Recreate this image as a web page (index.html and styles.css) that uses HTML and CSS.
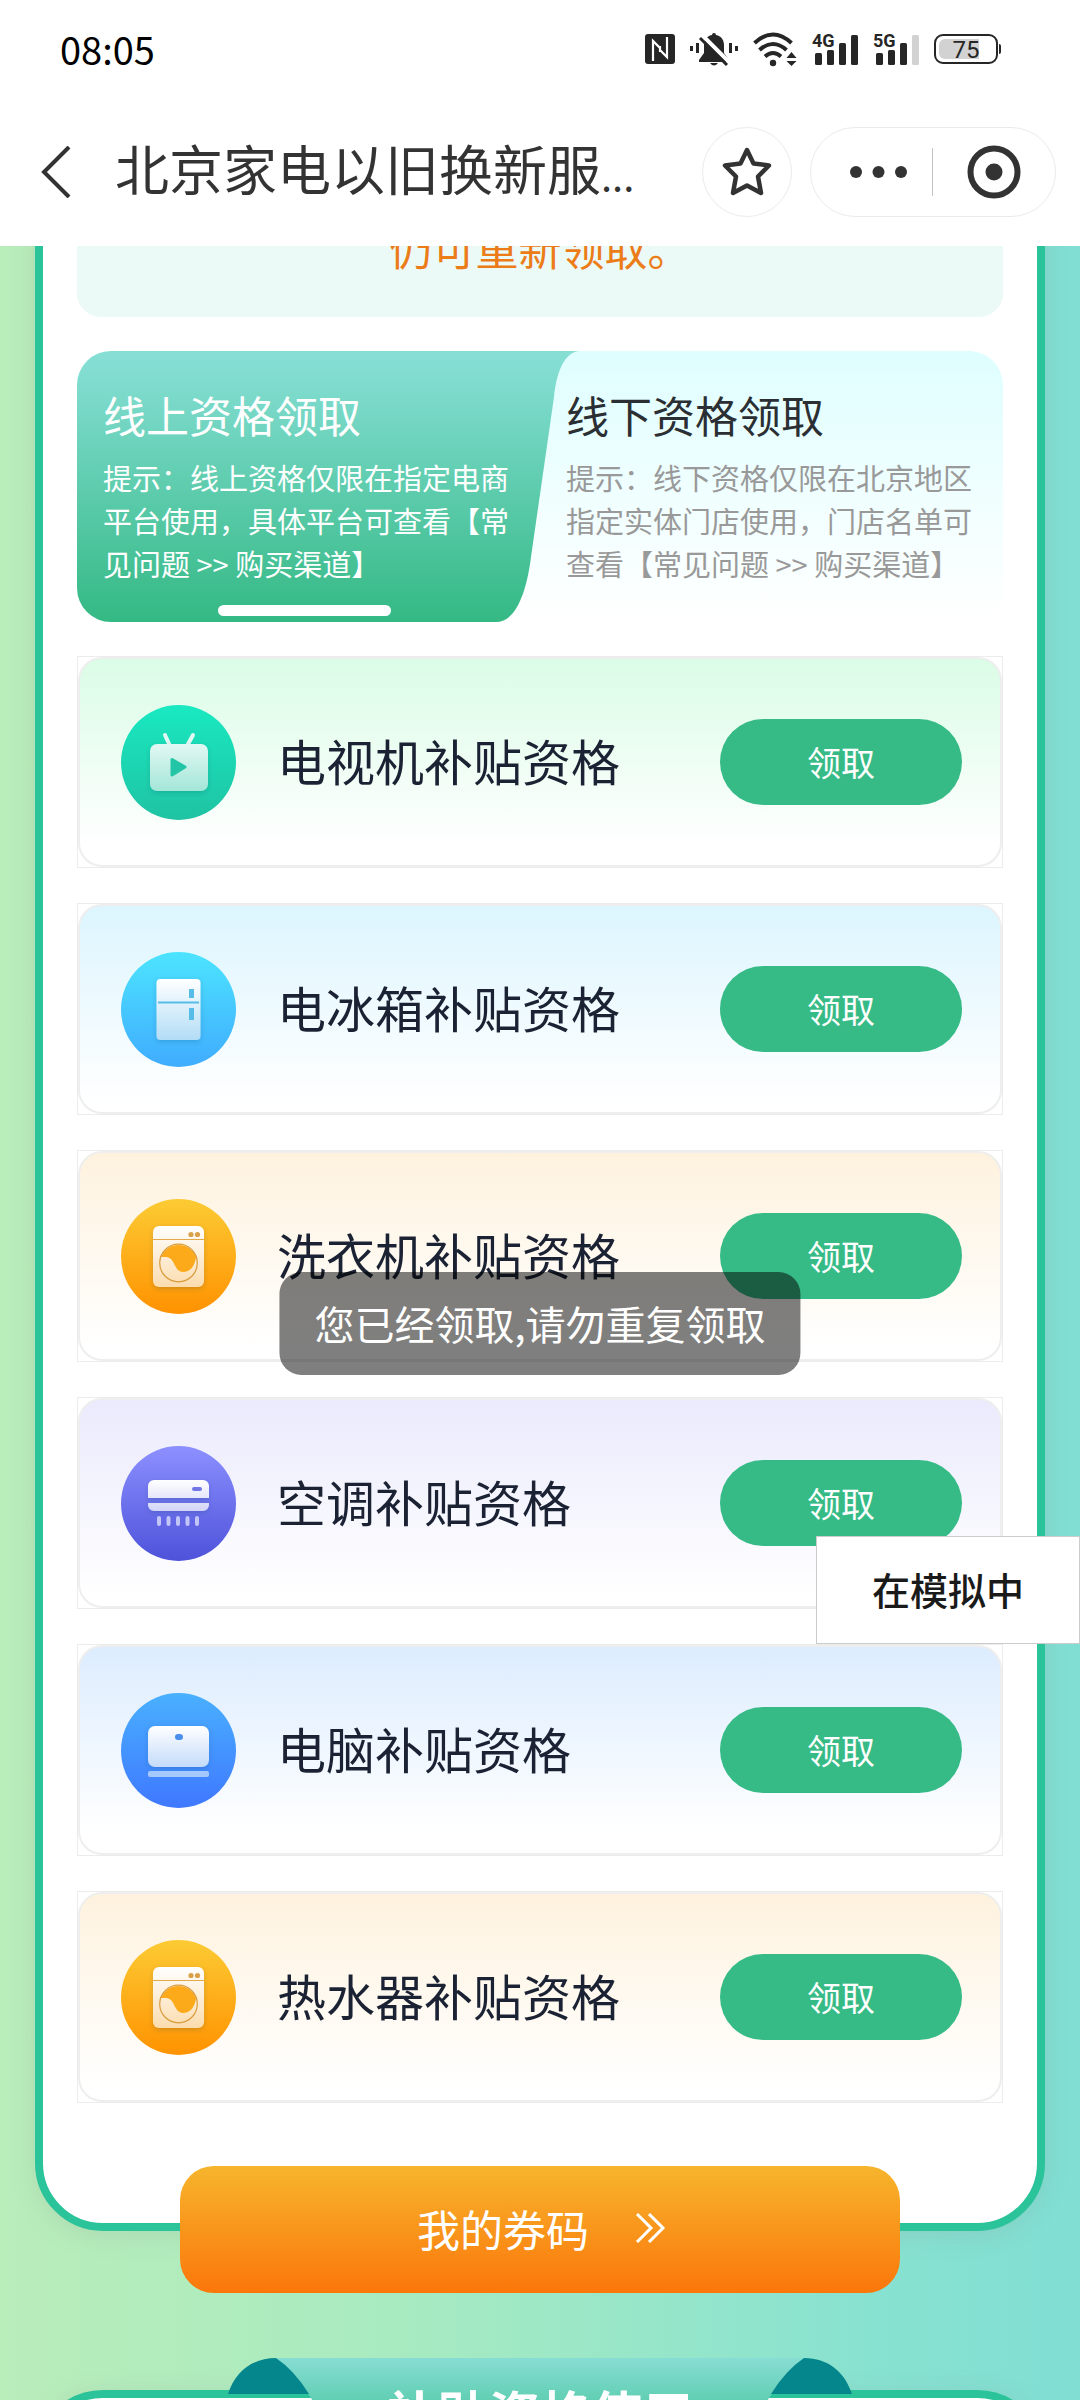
FILE: index.html
```html
<!DOCTYPE html>
<html lang="zh-CN">
<head>
<meta charset="utf-8">
<meta name="viewport" content="width=device-width, initial-scale=1">
<title>北京家电以旧换新服务</title>
<link rel="stylesheet" href="styles.css">
</head>
<body>
<svg class="defs" width="0" height="0" aria-hidden="true">
  <defs>
    <linearGradient id="tvBg" x1="0" y1="0" x2="0" y2="1"><stop offset="0" stop-color="#19e9c1"/><stop offset="1" stop-color="#1fc3a3"/></linearGradient>
    <linearGradient id="tvFg" x1="0" y1="0" x2="0" y2="1"><stop offset="0" stop-color="#e2f8f3"/><stop offset="1" stop-color="#a3e6d8"/></linearGradient>
    <linearGradient id="iceBg" x1="0" y1="0" x2="0" y2="1"><stop offset="0" stop-color="#4ce4ff"/><stop offset="1" stop-color="#40acff"/></linearGradient>
    <linearGradient id="iceFg" x1="0" y1="0" x2="0" y2="1"><stop offset="0" stop-color="#ffffff"/><stop offset="1" stop-color="#b2ddf6"/></linearGradient>
    <linearGradient id="washBg" x1="0" y1="0" x2="0" y2="1"><stop offset="0" stop-color="#fccb34"/><stop offset="1" stop-color="#ff9200"/></linearGradient>
    <linearGradient id="washFg" x1="0" y1="0" x2="0" y2="1"><stop offset="0" stop-color="#ffffff"/><stop offset="1" stop-color="#fbdcae"/></linearGradient>
    <linearGradient id="airBg" x1="0" y1="0" x2="0" y2="1"><stop offset="0" stop-color="#8c90ff"/><stop offset="1" stop-color="#4e52da"/></linearGradient>
    <linearGradient id="airFg" x1="0" y1="0" x2="0" y2="1"><stop offset="0" stop-color="#ffffff"/><stop offset="1" stop-color="#d3d5f7"/></linearGradient>
    <linearGradient id="pcBg" x1="0" y1="0" x2="0" y2="1"><stop offset="0" stop-color="#49b0ff"/><stop offset="1" stop-color="#3f78ff"/></linearGradient>
    <linearGradient id="pcFg" x1="0" y1="0" x2="0" y2="1"><stop offset="0" stop-color="#ffffff"/><stop offset="1" stop-color="#c3dbfa"/></linearGradient>
    <filter id="lift" x="-20%" y="-20%" width="140%" height="150%"><feDropShadow dx="0" dy="2" stdDeviation="2.500" flood-color="#003a50" flood-opacity=".18"/></filter>
    <symbol id="washer" viewBox="0 0 115 115">
      <circle cx="57.500" cy="57.500" r="57.500" fill="url(#washBg)"/>
      <rect x="32" y="27" width="51" height="61" rx="6" fill="url(#washFg)" filter="url(#lift)"/>
      <path d="M32 40.500h51" stroke="#e3a94a" stroke-width="1"/>
      <circle cx="70" cy="35.500" r="2.600" fill="#d9a24a"/><circle cx="76.500" cy="35.500" r="2.600" fill="#d9a24a"/>
      <path d="M40 58A18.800 18.800 0 0 1 75 58c-1 9-6 15-13 15-9 0-8-15-17-15-2 0-4 0-5 0z" fill="#fcaa19"/>
      <circle cx="57.500" cy="64" r="18.800" fill="none" stroke="#d99b3c" stroke-width="1.200"/>
    </symbol>
  </defs>
</svg>

<div class="app">
  <header class="top">
    <div class="status">
      <span class="time">08:05</span>
      <div class="signals">
        <svg width="30" height="30" viewBox="0 0 30 30"><rect width="30" height="30" rx="3" fill="#262626"/><path d="M8 27V7l7 7v4M22 3v20l-7-7v-4" fill="none" stroke="#fff" stroke-width="2.200"/></svg>
        <svg width="48" height="34" viewBox="0 0 48 34"><g fill="#262626"><path d="M22 3a2 2 0 0 1 4 0c6 1 8 6 8 10v8l5 7v2H9v-2l5-7v-8c0-4 2-9 8-10zM20 31h8q-4 5-8 0z"/><rect y="14" width="3" height="5"/><rect x="6" y="11" width="3" height="10"/><rect x="39" y="11" width="3" height="10"/><rect x="45" y="14" width="3" height="5"/></g><path d="M12 3l27 27" stroke="#fff" stroke-width="4"/><path d="M10 6l27 27" stroke="#262626" stroke-width="3"/></svg>
        <svg width="44" height="35" viewBox="0 0 44 35"><g fill="none" stroke="#262626" stroke-width="4"><path d="M1.500 11q18.500-17 37 0M6.500 18q13.500-12 27 0M12 24.500q8-7 16 0"/></g><circle cx="20" cy="31" r="3.200" fill="#262626"/><path d="M38.500 20l5 6h-10zM38.500 34l5-5h-10z" fill="#262626"/></svg>
        <span class="cell"><span class="net">4G</span><svg width="46" height="33" viewBox="0 0 46 33"><g fill="#262626"><rect x="3" y="20" width="7" height="12" rx="1.500"/><rect x="15" y="17" width="7" height="15" rx="1.500"/><rect x="27" y="10" width="7" height="22" rx="1.500"/><rect x="39" y="2" width="7" height="30" rx="1.500"/></g></svg></span>
        <span class="cell"><span class="net">5G</span><svg width="46" height="33" viewBox="0 0 46 33"><g fill="#262626"><rect x="3" y="20" width="7" height="12" rx="1.500"/><rect x="15" y="17" width="7" height="15" rx="1.500"/><rect x="27" y="10" width="7" height="22" rx="1.500"/></g><rect x="39" y="2" width="7" height="30" rx="1.500" fill="#d2d2d2"/></svg></span>
        <svg width="68" height="30" viewBox="0 0 68 30"><rect x="1" y="1" width="62" height="28" rx="8" fill="#fff" stroke="#262626" stroke-width="2"/><path d="M11 5h34v20H11a6 6 0 0 1-6-6v-8a6 6 0 0 1 6-6z" fill="#d2d2d2"/><path d="M65 10q2 0 2 2v6q0 2-2 2z" fill="#262626"/><text x="32" y="24" text-anchor="middle" class="level">75</text></svg>
      </div>
    </div>
    <nav class="nav">
      <button class="back" aria-label="返回"><svg width="32" height="52" viewBox="0 0 32 52"><path d="M29 1L4 26l25 25" fill="none" stroke="#333" stroke-width="4"/></svg></button>
      <h1 class="title">北京家电以旧换新服<span class="dots">...</span></h1>
      <button class="round" aria-label="收藏"><svg width="50" height="52" viewBox="0 0 50 52"><path d="M25 4l6.500 13.500 15.500 2-11 11 3 16.500-14-7.500L11 47l3-16.500-11-11 15.500-2z" fill="none" stroke="#333" stroke-width="4.500" stroke-linejoin="round"/></svg></button>
      <div class="capsule">
        <button class="more" aria-label="更多"><svg width="57" height="12" viewBox="0 0 57 12" fill="#333"><circle cx="6" cy="6" r="6"/><circle cx="28.500" cy="6" r="6"/><circle cx="51" cy="6" r="6"/></svg></button>
        <button class="close" aria-label="关闭"><svg width="54" height="54" viewBox="0 0 54 54"><circle cx="27" cy="27" r="23.500" fill="none" stroke="#333" stroke-width="6"/><circle cx="27" cy="27" r="8.500" fill="#333"/></svg></button>
      </div>
    </nav>
  </header>

  <main class="page">
    <section class="sheet first">
      <p class="notice">仍可重新领取。</p>

      <div class="tabs">
        <svg class="tabs-shape" viewBox="0 0 926 271" preserveAspectRatio="none" aria-hidden="true">
          <defs><linearGradient id="on" x1="0" y1="0" x2="0" y2="1"><stop offset="0" stop-color="#87dfd4"/><stop offset=".1" stop-color="#81dcd0"/><stop offset="1" stop-color="#34b984"/></linearGradient></defs>
          <path d="M34 0H503C490 0 480 16 477 46L454 206C450 238 440 271 419 271H34A34 34 0 0 1 0 237V34A34 34 0 0 1 34 0z" fill="url(#on)"/>
        </svg>
        <button class="tab active">
          <span class="tab-name">线上资格领取</span>
          <span class="tab-tip">提示：线上资格仅限在指定电商<br>平台使用，具体平台可查看【常<br>见问题 &gt;&gt; 购买渠道】</span>
        </button>
        <button class="tab">
          <span class="tab-name">线下资格领取</span>
          <span class="tab-tip">提示：线下资格仅限在北京地区<br>指定实体门店使用，门店名单可<br>查看【常见问题 &gt;&gt; 购买渠道】</span>
        </button>
      </div>

      <ul class="list">
        <li class="frame"><div class="item green">
          <svg class="pic" viewBox="0 0 115 115"><circle cx="57.500" cy="57.500" r="57.500" fill="url(#tvBg)"/><path d="M44 30l5 11M72 30l-6 11" stroke="#e2f8f3" stroke-width="4" stroke-linecap="round"/><rect x="29" y="39" width="58" height="47" rx="7" fill="url(#tvFg)" filter="url(#lift)"/><path d="M51 54.500l13 7.500-13 8z" fill="#22c5a5" stroke="#22c5a5" stroke-width="3" stroke-linejoin="round"/></svg>
          <span class="name">电视机补贴资格</span><button class="get">领取</button></div></li>
        <li class="frame"><div class="item sky">
          <svg class="pic" viewBox="0 0 115 115"><circle cx="57.500" cy="57.500" r="57.500" fill="url(#iceBg)"/><rect x="35.500" y="27" width="44" height="61" rx="4" fill="url(#iceFg)" filter="url(#lift)"/><path d="M37 50.500h41" stroke="#58bce8" stroke-width="2"/><path d="M68 37h5v9h-5zM68 56h5v12h-5z" fill="#58bce8"/></svg>
          <span class="name">电冰箱补贴资格</span><button class="get">领取</button></div></li>
        <li class="frame"><div class="item cream">
          <svg class="pic" viewBox="0 0 115 115"><use href="#washer"/></svg>
          <span class="name">洗衣机补贴资格</span><button class="get">领取</button></div></li>
        <li class="frame"><div class="item violet">
          <svg class="pic" viewBox="0 0 115 115"><circle cx="57.500" cy="57.500" r="57.500" fill="url(#airBg)"/><path d="M33 34h49a6 6 0 0 1 6 6v12H27V40a6 6 0 0 1 6-6zM27 57h61v2a6 6 0 0 1-6 6H33a6 6 0 0 1-6-6z" fill="url(#airFg)" filter="url(#lift)"/><rect x="71" y="41" width="10" height="4" rx="2" fill="#7276e6"/><path d="M38 72v6M47.500 72v6M57 72v6M66.500 72v6M76 72v6" stroke="#c2c5f8" stroke-width="4" stroke-linecap="round"/></svg>
          <span class="name">空调补贴资格</span><button class="get">领取</button></div></li>
        <li class="frame"><div class="item blue">
          <svg class="pic" viewBox="0 0 115 115"><circle cx="57.500" cy="57.500" r="57.500" fill="url(#pcBg)"/><rect x="27" y="33" width="61" height="41" rx="7" fill="url(#pcFg)" filter="url(#lift)"/><rect x="54" y="41" width="8" height="6" rx="3" fill="#4b8fec"/><rect x="27" y="78" width="61" height="6" rx="2" fill="#a5c8fd"/></svg>
          <span class="name">电脑补贴资格</span><button class="get">领取</button></div></li>
        <li class="frame"><div class="item cream">
          <svg class="pic" viewBox="0 0 115 115"><use href="#washer"/></svg>
          <span class="name">热水器补贴资格</span><button class="get">领取</button></div></li>
      </ul>
    </section>

    <button class="codes">我的券码<svg width="32" height="30" viewBox="0 0 32 30"><path d="M2 1l14 14L2 29M14 1l14 14-14 14" fill="none" stroke="#fff" stroke-width="3"/></svg></button>

    <section class="sheet second">
      <div class="banner">
        <svg class="banner-shape" viewBox="0 0 624 100" aria-hidden="true">
          <defs><linearGradient id="ribbon" x1="0" y1="0" x2="0" y2="1"><stop offset="0" stop-color="#87ddd4"/><stop offset=".45" stop-color="#5fceb1"/><stop offset="1" stop-color="#34b984"/></linearGradient></defs>
          <path d="M48 0H576Q558 14 541 40C524 66 516 100 480 100H144C108 100 100 66 83 40Q66 14 48 0z" fill="url(#ribbon)"/>
          <path d="M0 36C7 14 24 0 48 0Q66 12 81 36zM624 36C617 14 600 0 576 0Q558 12 543 36z" fill="#05868c"/>
        </svg>
        <h2 class="banner-title">补贴资格使用</h2>
      </div>
    </section>
  </main>

  <div class="toast" role="status">您已经领取,请勿重复领取</div>
  <div class="sim">在模拟中</div>
</div>
</body>
</html>
```
FILE: styles.css
```css
* { box-sizing: border-box; }

body {
  margin: 0;
  font-family: "Noto Sans CJK SC", "Noto Sans", sans-serif;
  color: #333;
}

button {
  margin: 0;
  padding: 0;
  border: 0;
  background: none;
  font: inherit;
  color: inherit;
}

h1, h2, p, ul { margin: 0; padding: 0; font-weight: 400; }
svg { display: block; flex: none; }
.defs { position: absolute; }

.app {
  position: relative;
  display: flex;
  flex-direction: column;
  height: 100vh;
  overflow: hidden;
}

/* top bar */
.top { position: relative; z-index: 1; flex: none; background: #fff; }

.status {
  display: flex;
  align-items: center;
  justify-content: space-between;
  height: 98px;
  padding: 0 78px 0 60px;
}
.time { font-size: 38px; line-height: 40px; color: #000; }
.signals { display: flex; align-items: center; gap: 15px; }
.cell { position: relative; }
.net {
  position: absolute;
  top: -3px;
  left: 0;
  font: 700 18px/21px Roboto, sans-serif;
  color: #262626;
}
.level { font: 400 24px Roboto, sans-serif; fill: #262626; }

.nav {
  display: flex;
  align-items: center;
  height: 148px;
  padding: 0 24px 0 40px;
}
.title {
  flex: 1;
  margin-left: 43px;
  padding-bottom: 2px;
  font-size: 54px;
  line-height: 64px;
  white-space: nowrap;
}
.dots { font-size: 40px; }
.round {
  display: grid;
  place-items: center;
  width: 90px;
  height: 90px;
  border: 1px solid #ebebeb;
  border-radius: 50%;
}
.capsule {
  display: flex;
  align-items: center;
  height: 90px;
  margin-left: 18px;
  border: 1px solid #ebebeb;
  border-radius: 45px;
}
.more, .close { display: grid; place-items: center; width: 122px; }
.more { height: 48px; padding-left: 14px; border-right: 1px solid #c4c4c4; }
.close { height: 54px; }

/* scrolling page */
.page {
  flex: 1;
  min-height: 0;
  overflow: hidden;
  background: linear-gradient(90deg, #b9edba 0%, #a9ebc0 35%, #88e2d0 80%, #80ded3 100%);
}
.sheet {
  margin: 0 35px;
  padding: 0 34px;
  border: 8px solid #2bc39a;
  border-radius: 68px;
  background: #fff;
  box-shadow: 0 4px 24px rgba(140, 140, 140, .2);
}
.first { margin-top: -152px; padding-bottom: 120px; }

.notice {
  padding: 122px 0 47px;
  border-radius: 24px;
  background: #ebf9f7;
  color: #ec7c18;
  font-size: 43px;
  line-height: 46px;
  text-align: center;
}

.tabs {
  position: relative;
  display: flex;
  justify-content: space-between;
  height: 271px;
  margin-top: 34px;
  border-radius: 34px;
  background: linear-gradient(#dffeff, #fff);
}
.tabs-shape { position: absolute; inset: 0; width: 100%; height: 100%; }
.tab {
  position: relative;
  display: flex;
  flex-direction: column;
  padding: 36px 31px 0 26px;
  text-align: left;
  color: #2b2f33;
}
.tab-name { font-size: 43px; line-height: 54px; }
.tab-tip { margin-top: 15px; font-size: 29px; line-height: 43px; color: #999; white-space: nowrap; }
.active, .active .tab-tip { color: #fff; }
.active::after {
  content: "";
  position: absolute;
  left: 141px;
  bottom: 6px;
  width: 173px;
  height: 11px;
  border-radius: 6px;
  background: #fff;
}

.list {
  display: flex;
  flex-direction: column;
  gap: 35px;
  margin-top: 34px;
  list-style: none;
}
.frame { border: 1px solid #ececec; }
.item {
  display: flex;
  align-items: center;
  height: 210px;
  padding: 0 38px 0 41px;
  border: 2px solid #eee;
  border-radius: 24px;
}
.green { background: linear-gradient(#dafce6, #fff 90%) border-box; }
.sky { background: linear-gradient(#dcf5fe, #fff 95%) border-box; }
.cream { background: linear-gradient(#fef2de, #fff 95%) border-box; }
.violet { background: linear-gradient(#eaeafd, #fff 95%) border-box; }
.blue { background: linear-gradient(#dcecfe, #fff 90%) border-box; }
.pic { width: 115px; height: 115px; }
.name {
  flex: 1;
  margin-left: 41px;
  padding-bottom: 4px;
  font-size: 49px;
  line-height: 60px;
  color: #1b2233;
}
.get {
  width: 242px;
  height: 86px;
  padding-bottom: 2px;
  border-radius: 43px;
  background: #36bb87;
  color: #fff;
  font-size: 34px;
}

.codes {
  position: relative;
  display: flex;
  align-items: center;
  justify-content: center;
  gap: 46px;
  width: calc(100% - 360px);
  height: 127px;
  margin: -65px auto 0;
  padding: 0 0 4px 4px;
  border-radius: 34px;
  background: linear-gradient(#f7b52d, #fb760a);
  color: #fff;
  font-size: 43px;
}

.second { position: relative; height: 400px; margin-top: 97px; }
.banner { position: absolute; top: -40px; left: 0; right: 0; }
.banner-shape { width: 624px; height: 100px; margin: 0 auto; }
.banner-title {
  position: absolute;
  top: 24px;
  left: 0;
  right: 0;
  font-size: 51px;
  line-height: 60px;
  font-weight: 700;
  text-align: center;
  color: #fff;
}

/* overlays */
.toast {
  position: absolute;
  z-index: 2;
  top: 53%;
  left: 50%;
  transform: translateX(-50%);
  padding: 22px 35px 23px;
  border-radius: 22px;
  background: rgba(0, 0, 0, .5);
  color: #fff;
  font-size: 40px;
  line-height: 58px;
  white-space: nowrap;
}
.sim {
  position: absolute;
  z-index: 2;
  top: 64%;
  right: 0;
  padding: 25px 55px 27px;
  border: 1px solid #ccc;
  background: #fff;
  color: #1a1a1a;
  font-size: 38px;
  line-height: 54px;
  font-weight: 500;
}
```
